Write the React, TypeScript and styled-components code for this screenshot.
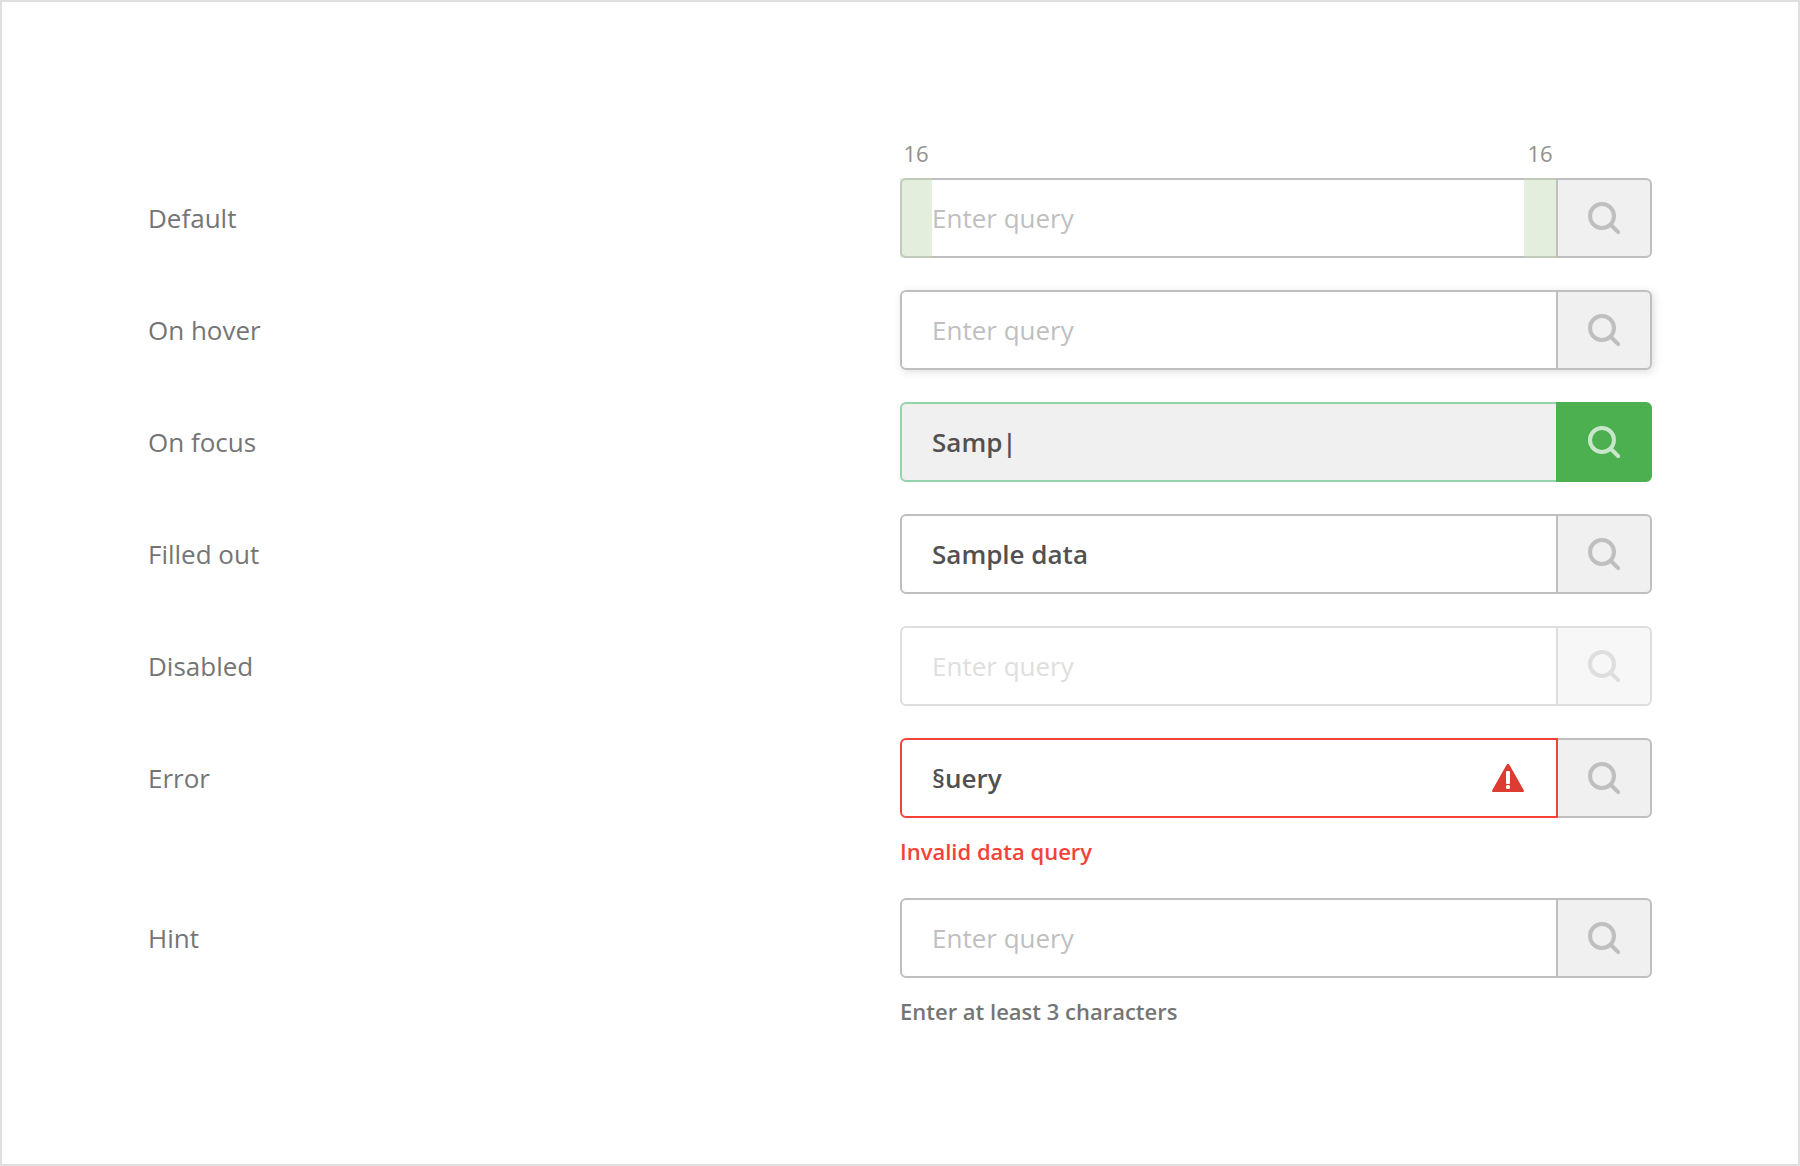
import React, { useId } from 'react';
import styled, { createGlobalStyle, css } from 'styled-components';

type FieldState = 'default' | 'hover' | 'focus' | 'error' | 'disabled';

const color = {
  frame: '#dfdfdf',
  border: '#bfbfbf',
  fill: '#f0f0f0',
  muted: '#757575',
  text: '#515151',
  focusBorder: '#94d3ac',
  green: '#4caf50',
  greenLight: '#c8e6c9',
  error: '#f44336',
  alert: '#dd3d31',
};

const GlobalStyle = createGlobalStyle`
  *, *::before, *::after { box-sizing: border-box; }
  body {
    margin: 0;
    background: #fff;
    font-family: 'Open Sans', 'Noto Sans', sans-serif;
  }
`;

const Page = styled.main`
  min-height: 100vh;
  padding: 136px 146px 112px;
  border: 2px solid ${color.frame};
`;

const Rows = styled.div`
  display: flex;
  flex-direction: column;
  gap: 32px;
`;

const Row = styled.div`
  display: grid;
  grid-template-columns: 1fr 1fr;
`;

const RowLabel = styled.label`
  color: ${color.muted};
  font-size: 26px;
  line-height: 80px;
`;

const MeasureRow = styled.div`
  display: flex;
  justify-content: space-between;
  margin-left: 50%;
  padding: 0 96px 10px 0;
`;

const Measure = styled.span`
  width: 32px;
  color: #909090;
  font-size: 22px;
  line-height: 30px;
  text-align: center;
`;

const Control = styled.div<{ $state: FieldState }>`
  position: relative;
  display: flex;
  height: 80px;
  border-radius: 6px;
  ${({ $state }) => $state === 'hover' && css`box-shadow: 2px 2px 8px rgba(0, 0, 0, 0.13);`}
  ${({ $state }) => $state === 'disabled' && css`opacity: 0.5;`}
`;

const inputBorder = (state: FieldState) =>
  state === 'error' ? color.error : state === 'focus' ? color.focusBorder : color.border;

const Input = styled.input<{ $state: FieldState }>`
  flex: 1;
  min-width: 0;
  padding: 0 30px;
  border: 2px solid ${({ $state }) => inputBorder($state)};
  border-radius: 6px 0 0 6px;
  outline: none;
  background: ${({ $state }) => ($state === 'focus' ? color.fill : '#fff')};
  color: ${color.text};
  font: 600 26px 'Open Sans', 'Noto Sans', sans-serif;
  ${({ $state }) => $state === 'error' && css`
    z-index: 1;
    padding-right: 78px;
  `}

  &::placeholder {
    color: ${color.border};
    font-weight: 400;
    opacity: 1;
  }
`;

const SearchButton = styled.button<{ $active: boolean }>`
  display: flex;
  align-items: center;
  justify-content: center;
  width: 96px;
  margin: 0 0 0 -2px;
  padding: 0;
  border: 2px solid ${({ $active }) => ($active ? color.green : color.border)};
  border-radius: 0 6px 6px 0;
  background: ${({ $active }) => ($active ? color.green : color.fill)};
  color: ${({ $active }) => ($active ? color.greenLight : color.border)};
`;

const PaddingMark = styled.span<{ $side: 'start' | 'end' }>`
  position: absolute;
  top: 0;
  bottom: 0;
  ${({ $side }) => ($side === 'start' ? 'left: 0;' : 'right: 96px;')}
  width: 32px;
  background: rgba(192, 220, 177, 0.45);
  pointer-events: none;
`;

const AlertSlot = styled.span`
  position: absolute;
  top: 26px;
  right: 128px;
  z-index: 2;
  display: flex;
  color: ${color.alert};
`;

const Helper = styled.p<{ $error: boolean }>`
  margin: 18px 0 0;
  color: ${({ $error }) => ($error ? color.error : color.muted)};
  font-size: 22px;
  font-weight: 600;
  line-height: 30px;
`;

const SearchIcon = () => (
  <svg width="32" height="32" viewBox="0 0 32 32" fill="none" stroke="currentColor" aria-hidden="true">
    <path d="M14 2a12 12 0 1 0 0 24a12 12 0 1 0 0-24zM23 23l7.2 7.2" strokeWidth="4" strokeLinecap="round" />
  </svg>
);

const AlertIcon = () => (
  <svg width="32" height="28" viewBox="0 0 32 28" aria-hidden="true">
    <path
      d="M14.6.8a1.6 1.6 0 0 1 2.8 0L31.8 26.2a1.2 1.2 0 0 1-1 1.8H1.2a1.2 1.2 0 0 1-1-1.8z"
      fill="currentColor"
    />
    <rect x="14" y="7" width="4" height="13" rx="1" fill="#fff" />
    <rect x="14" y="21" width="4" height="4" rx="1.5" fill="#fff" />
  </svg>
);

interface SearchFieldProps {
  label: string;
  state?: FieldState;
  value?: string;
  helper?: string;
  showPadding?: boolean;
}

const SearchField = ({ label, state = 'default', value, helper, showPadding }: SearchFieldProps) => {
  const id = useId();
  const disabled = state === 'disabled';
  return (
    <Row>
      <RowLabel htmlFor={id}>{label}</RowLabel>
      <div>
        <Control $state={state}>
          <Input
            id={id}
            type="text"
            $state={state}
            defaultValue={value}
            placeholder="Enter query"
            disabled={disabled}
            aria-invalid={state === 'error'}
            aria-describedby={helper ? `${id}-helper` : undefined}
          />
          <SearchButton type="button" aria-label="Search" disabled={disabled} $active={state === 'focus'}>
            <SearchIcon />
          </SearchButton>
          {showPadding && (
            <>
              <PaddingMark $side="start" />
              <PaddingMark $side="end" />
            </>
          )}
          {state === 'error' && (
            <AlertSlot>
              <AlertIcon />
            </AlertSlot>
          )}
        </Control>
        {helper && (
          <Helper id={`${id}-helper`} $error={state === 'error'}>
            {helper}
          </Helper>
        )}
      </div>
    </Row>
  );
};

export default function App() {
  return (
    <>
      <GlobalStyle />
      <Page>
        <MeasureRow>
          <Measure>16</Measure>
          <Measure>16</Measure>
        </MeasureRow>
        <Rows>
          <SearchField label="Default" showPadding />
          <SearchField label="On hover" state="hover" />
          <SearchField label="On focus" state="focus" value="Samp|" />
          <SearchField label="Filled out" value="Sample data" />
          <SearchField label="Disabled" state="disabled" />
          <SearchField label="Error" state="error" value="§uery" helper="Invalid data query" />
          <SearchField label="Hint" helper="Enter at least 3 characters" />
        </Rows>
      </Page>
    </>
  );
}
